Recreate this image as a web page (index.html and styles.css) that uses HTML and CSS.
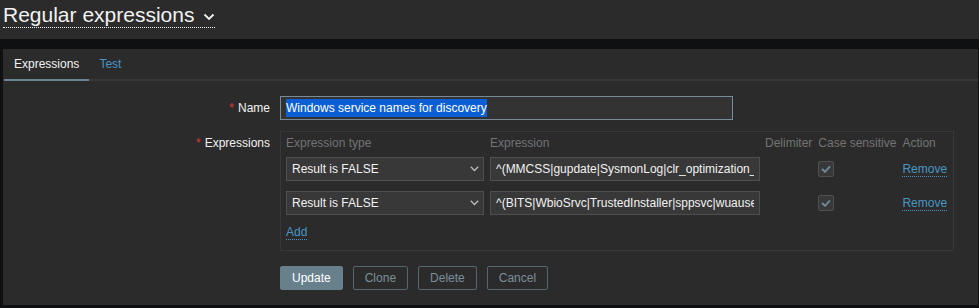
FILE: index.html
```html
<!DOCTYPE html>
<html lang="en">
<head>
    <meta charset="UTF-8">
    <title>Regular expressions</title>
    <link rel="stylesheet" href="styles.css">
</head>
<body>
    <header class="page-header">
        <h1 class="page-title">Regular expressions
            <svg class="title-arrow" width="12" height="8" viewBox="0 0 12 8"><path d="M1.5 1.5 L6 6 L10.5 1.5" fill="none" stroke="#f2f2f2" stroke-width="1.8"/></svg>
        </h1>
    </header>

    <main class="panel">
        <ul class="tabs">
            <li class="tab active">Expressions</li>
            <li class="tab">Test</li>
        </ul>

        <form class="form">
            <label class="form-label"><span class="req">*</span>Name</label>
            <div class="form-field">
                <div class="text-input name-input"><span class="selected">Windows service names for discovery</span></div>
            </div>

            <label class="form-label"><span class="req">*</span>Expressions</label>
            <div class="form-field">
                <table class="expr-table">
                    <thead>
                        <tr>
                            <th class="col-type">Expression type</th>
                            <th class="col-expr">Expression</th>
                            <th class="col-delim">Delimiter</th>
                            <th class="col-case">Case sensitive</th>
                            <th class="col-action">Action</th>
                        </tr>
                    </thead>
                    <tbody>
                        <tr>
                            <td>
                                <div class="select">
                                    <span>Result is FALSE</span>
                                    <svg width="9" height="6" viewBox="0 0 9 6"><path d="M0.8 0.8 L4.5 4.5 L8.2 0.8" fill="none" stroke="#bdbdbd" stroke-width="1.3"/></svg>
                                </div>
                            </td>
                            <td class="cell-expr"><input class="text-input expr-input" type="text" value="^(MMCSS|gupdate|SysmonLog|clr_optimization_v2.0.50727_32|clr_optimization_v4.0.30319_32)$"></td>
                            <td></td>
                            <td>
                                <span class="checkbox"><svg width="10" height="8" viewBox="0 0 10 8"><path d="M1 4 L4 6.8 L9 1.3" fill="none" stroke="#6e8794" stroke-width="2"/></svg></span>
                            </td>
                            <td><a class="link">Remove</a></td>
                        </tr>
                        <tr>
                            <td>
                                <div class="select">
                                    <span>Result is FALSE</span>
                                    <svg width="9" height="6" viewBox="0 0 9 6"><path d="M0.8 0.8 L4.5 4.5 L8.2 0.8" fill="none" stroke="#bdbdbd" stroke-width="1.3"/></svg>
                                </div>
                            </td>
                            <td class="cell-expr"><input class="text-input expr-input" type="text" value="^(BITS|WbioSrvc|TrustedInstaller|sppsvc|wuauserv|gupdate)$"></td>
                            <td></td>
                            <td>
                                <span class="checkbox"><svg width="10" height="8" viewBox="0 0 10 8"><path d="M1 4 L4 6.8 L9 1.3" fill="none" stroke="#6e8794" stroke-width="2"/></svg></span>
                            </td>
                            <td><a class="link">Remove</a></td>
                        </tr>
                        <tr class="add-row">
                            <td colspan="5"><a class="link">Add</a></td>
                        </tr>
                    </tbody>
                </table>
            </div>

            <div class="form-buttons">
                <button type="button" class="btn btn-main">Update</button>
                <button type="button" class="btn btn-alt">Clone</button>
                <button type="button" class="btn btn-alt">Delete</button>
                <button type="button" class="btn btn-alt">Cancel</button>
            </div>
        </form>
    </main>
</body>
</html>
```

FILE: styles.css
```css
body {
    margin: 0;
    background-color: #0f1011;
    font-family: 'Liberation Sans', Arial, sans-serif;
    font-size: 12px;
    color: #f2f2f2;
}
.page-header {
    background-color: #2b2b2b;
    height: 39px;
    padding: 3px 0 0 3px;
    box-sizing: border-box;
}
.page-title {
    display: inline-flex;
    align-items: center;
    gap: 9px;
    margin: 0;
    font-size: 21px;
    font-weight: normal;
    line-height: 24px;
    border-bottom: 1px dotted #f2f2f2;
}
.title-arrow {
    margin-top: 3px;
}
.panel {
    background-color: #2b2b2b;
    margin: 10px 1px 0 3px;
    padding-bottom: 15px;
}
.tabs {
    display: flex;
    list-style: none;
    margin: 0;
    padding: 0 0 0 1px;
    border-bottom: 2px solid #383838;
}
.tab {
    padding: 8px 10px;
    line-height: 14px;
    color: #4796c4;
    border-bottom: 2px solid transparent;
    margin-bottom: -2px;
}
.tab.active {
    color: #f2f2f2;
    border-bottom-color: #6b8594;
}
.form {
    display: grid;
    grid-template-columns: 267px 1fr;
    column-gap: 10px;
    row-gap: 11px;
    padding-top: 15px;
}
.form-label {
    text-align: right;
    line-height: 24px;
}
.req {
    color: #e33734;
    margin-right: 4px;
}
.text-input {
    box-sizing: border-box;
    height: 24px;
    background-color: #383838;
    border: 1px solid #4f4f4f;
    color: #f2f2f2;
    font-family: inherit;
    font-size: 12px;
    padding: 0 5px;
    outline: none;
}
.name-input {
    width: 453px;
    border-color: #768d99;
    background-color: #333333;
    line-height: 22px;
}
.selected {
    background-color: #0b5fd6;
    color: #ffffff;
    padding: 2px 0;
}
.expr-table {
    width: 673px;
    border: 1px solid #383838;
    border-spacing: 0;
    padding: 4px 0 11px 5px;
    box-sizing: border-box;
}
.expr-table th {
    text-align: left;
    font-weight: normal;
    color: #737373;
    line-height: 14px;
    padding: 0 6px 7px 0;
    white-space: nowrap;
}
.expr-table td {
    padding: 0 6px 10px 0;
    vertical-align: middle;
}
.expr-table .col-expr,
.expr-table .cell-expr {
    padding-right: 5px;
}
.expr-table .add-row td {
    padding-bottom: 0;
    line-height: 14px;
}
.col-type { width: 198px; }
.col-expr { width: 270px; }
.col-delim { width: 48px; }
.col-case { width: 77px; }
.select {
    box-sizing: border-box;
    width: 198px;
    height: 24px;
    display: flex;
    align-items: center;
    justify-content: space-between;
    padding: 0 4px 0 5px;
    background-color: #383838;
    border: 1px solid #4f4f4f;
}
.expr-input {
    width: 270px;
    display: block;
}
.checkbox {
    box-sizing: border-box;
    width: 16px;
    height: 16px;
    display: flex;
    align-items: center;
    justify-content: center;
    background-color: #383838;
    border: 1px solid #4f4f4f;
    border-radius: 2px;
}
.link {
    color: #4796c4;
    border-bottom: 1px dotted #4796c4;
    cursor: pointer;
}
.form-buttons {
    grid-column: 2;
    display: flex;
    gap: 10px;
    margin-top: 4px;
}
.btn {
    height: 24px;
    padding: 0 11px;
    font-family: inherit;
    font-size: 12px;
    border-radius: 2px;
    cursor: pointer;
}
.btn-main {
    background-color: #687f8c;
    border: 1px solid #687f8c;
    color: #ffffff;
}
.btn-alt {
    background-color: transparent;
    border: 1px solid #55666f;
    color: #7b8f9a;
}
```
